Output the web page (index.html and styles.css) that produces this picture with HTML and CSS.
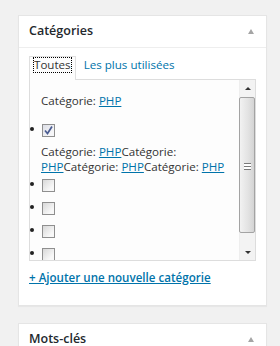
FILE: index.html
```html
<!DOCTYPE html>
<html lang="fr">
<head>
<meta charset="utf-8">
<title>Catégories</title>
<link rel="stylesheet" href="styles.css">
</head>
<body>
<div class="postbox">
	<h2 class="hndle"><span>Catégories</span><span class="toggle"></span></h2>
	<div class="inside">
		<ul class="tabs">
			<li class="on"><a href="#">Toutes</a></li>
			<li><a href="#">Les plus utilisées</a></li>
		</ul>
		<div class="tabs_panel">
			<div class="checklist">
				<p class="cat first">Catégorie: <a href="#">PHP</a></p>
				<ul class="checks top">
					<li><span class="box checked"><svg width="11" height="11" viewBox="0 0 11 11"><polyline points="2,5.5 4.5,8.5 9,1.5" fill="none" stroke="#4a5c92" stroke-width="1.7"/></svg></span></li>
				</ul>
				<p class="cat multi">Catégorie: <a href="#">PHP</a>Catégorie: <a href="#">PHP</a>Catégorie: <a href="#">PHP</a>Catégorie: <a href="#">PHP</a></p>
				<ul class="checks">
					<li><span class="box"></span></li>
					<li><span class="box"></span></li>
					<li><span class="box"></span></li>
					<li><span class="box"></span></li>
				</ul>
			</div>
			<div class="scrollbar">
				<div class="sb_btn up"></div>
				<div class="sb_track">
					<div class="sb_thumb"><span class="grip"></span></div>
				</div>
				<div class="sb_btn down"></div>
			</div>
		</div>
		<p class="add_new"><a href="#">+ Ajouter une nouvelle catégorie</a></p>
	</div>
</div>
<div class="postbox">
	<h2 class="hndle"><span>Mots-clés</span><span class="toggle"></span></h2>
</div>
</body>
</html>
```
FILE: styles.css
```css
* {margin:0; padding:0; box-sizing:border-box}
li {list-style:none}
html {overflow:hidden}
body {
	height:346px;
	overflow:hidden;
	background-color:#f1f1f1;
	padding:15px 13px 0 18px;
	font-family:"Open Sans", "Noto Sans", sans-serif;
	font-size:11.6px;
	color:#444;
}
a {color:#0073aa}

.postbox {
	width:249px;
	background-color:#fff;
	border:1px solid #e5e5e5;
	box-shadow:0 1px 1px rgba(0,0,0,.04);
}
.postbox + .postbox {margin-top:17px}

.hndle {
	display:flex;
	justify-content:space-between;
	align-items:center;
	padding:5px 12px 7px 10px;
	line-height:19px;
	font-size:12.5px;
	font-weight:600;
	color:#23282d;
	border-bottom:1px solid #eee;
}
.toggle {
	width:0;
	height:0;
	border-left:3.5px solid transparent;
	border-right:3.5px solid transparent;
	border-bottom:5px solid #a5a5a5;
	margin-top:1px;
}

.inside {padding:0 10px 20px}

/* onglets */
.tabs {
	display:flex;
	margin-top:8px;
	position:relative;
	z-index:1;
}
.tabs > li {
	padding:0 3px 7px;
	border:1px solid transparent;
	border-bottom:0;
	margin-bottom:-1px;
}
.tabs > li.on {
	border-color:#dfdfdf;
	background-color:#fdfdfd;
}
.tabs > li + li {margin-left:2px}
.tabs > li > a {
	display:block;
	padding:0 1px;
	line-height:14px;
	border:1px solid transparent;
	text-decoration:none;
}
.tabs > li.on > a {
	padding:0;
	color:#333;
	border:1px dotted #000;
}

.tabs_panel {
	display:flex;
	height:182px;
	border:1px solid #dddddd;
	background-color:#fdfdfd;
	overflow:hidden;
}
.checklist {
	flex:1;
	overflow:hidden;
}
.cat {
	padding-left:11px;
	line-height:15px;
	color:#333;
}
.cat.first {margin-top:13px}
.cat.multi {
	margin-top:3px;
	line-height:14.5px;
}
.checks.top {margin-top:11px}
.checks > li {
	display:flex;
	align-items:center;
	height:23px;
}
.checks > li::before {
	content:"";
	width:4px;
	height:4px;
	border-radius:50%;
	background-color:#222;
	margin:-3px 8px 0 0;
}
.box {
	display:flex;
	align-items:center;
	justify-content:center;
	width:13px;
	height:13px;
	border:1px solid #8f8f8f;
	background:linear-gradient(135deg, #d8d8d8, #f8f8f8 75%);
}
.box.checked {background:linear-gradient(135deg, #dcdee6, #f6f6f8 75%)}

/* barre de défilement */
.scrollbar {
	width:16px;
	display:flex;
	flex-direction:column;
	background-color:#f3f3f3;
	border-left:1px solid #eeeeee;
}
.sb_btn {
	height:17px;
	display:flex;
	align-items:center;
	justify-content:center;
}
.sb_btn::after {
	content:"";
	border-left:3px solid transparent;
	border-right:3px solid transparent;
}
.sb_btn.up::after {border-bottom:3px solid #333}
.sb_btn.down::after {border-top:3px solid #333; margin-top:2px}
.sb_track {
	flex:1;
	padding-bottom:10px;
	display:flex;
}
.sb_thumb {
	flex:1;
	display:flex;
	align-items:center;
	justify-content:center;
	border:1px solid #a3a3a3;
	border-radius:2px;
	background:linear-gradient(to right, #f2f2f2, #e2e2e2 60%, #d4d4d4);
	margin:0 0 0 -1px;
}
.grip {
	width:7px;
	height:7px;
	border-top:1px solid #7a7a7a;
	border-bottom:1px solid #7a7a7a;
	background:linear-gradient(#fff 2px, #7a7a7a 2px, #7a7a7a 3px, #fff 3px);
	margin-top:2px;
}

.add_new {
	margin-top:9px;
	line-height:15px;
	font-weight:600;
}
```
